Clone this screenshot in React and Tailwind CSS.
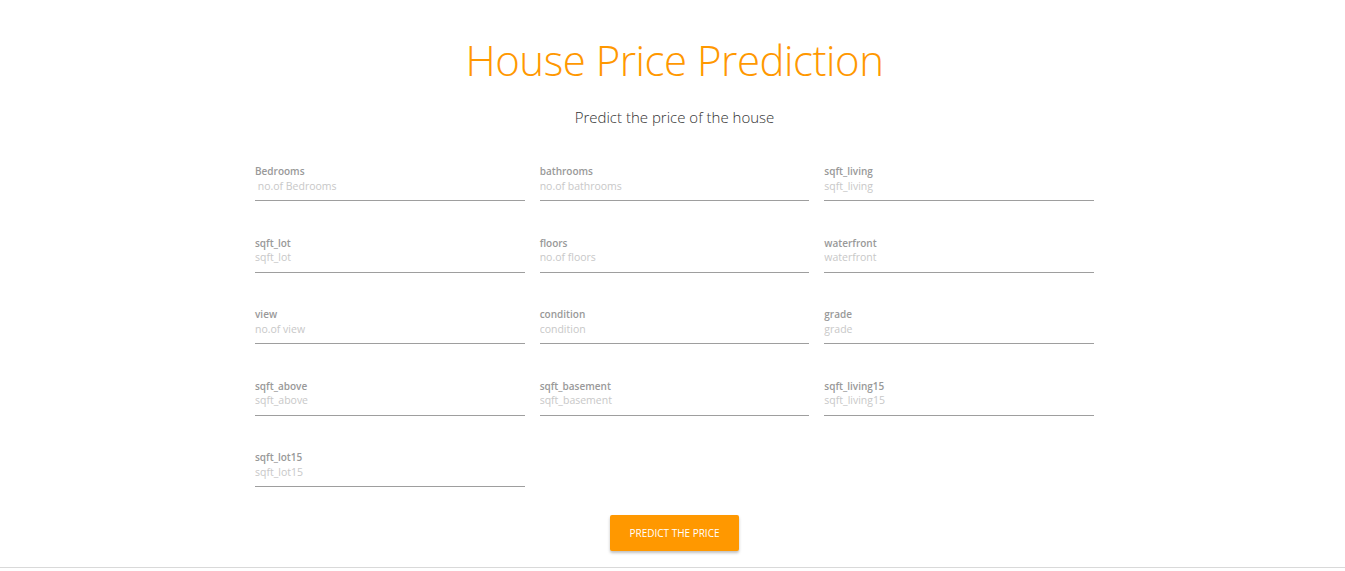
const fields = [
  ['Bedrooms', ' no.of Bedrooms'],
  ['bathrooms', 'no.of bathrooms'],
  ['sqft_living', 'sqft_living'],
  ['sqft_lot', 'sqft_lot'],
  ['floors', 'no.of floors'],
  ['waterfront', 'waterfront'],
  ['view', 'no.of view'],
  ['condition', 'condition'],
  ['grade', 'grade'],
  ['sqft_above', 'sqft_above'],
  ['sqft_basement', 'sqft_basement'],
  ['sqft_living15', 'sqft_living15'],
  ['sqft_lot15', 'sqft_lot15'],
];

export default function App() {
  return (
    <div className="min-h-[571px] bg-white font-['Open_Sans',sans-serif] flex flex-col">
      <div className="flex-1 flex flex-col items-center pl-[4px]">
        <h1 className="mt-[34px] text-[42px] leading-[52px] font-light text-[#ff9800] tracking-[-0.5px]">
          House Price Prediction
        </h1>
        <p className="mt-[21px] text-[15px] leading-[20px] font-light text-[#333]">
          Predict the price of the house
        </p>

        <form className="mt-[38px] w-[839px] grid grid-cols-3 gap-x-[15px] gap-y-[35.5px]">
          {fields.map(([label, ph]) => (
            <div key={label} className="flex flex-col">
              <label className="text-[10px] leading-[12px] font-semibold text-[#999]">{label}</label>
              <input
                placeholder={ph}
                className="h-[24px] pt-[1px] pb-[7px] border-b border-[#9e9e9e] text-[10.5px] outline-none placeholder:text-[#c8c8c8] bg-transparent"
              />
            </div>
          ))}
        </form>

        <button className="mt-[28px] w-[129px] h-[36px] bg-[#ff9800] text-white text-[10px] font-medium uppercase rounded-[2px] shadow-[0_2px_3px_rgba(0,0,0,0.25)]">
          Predict the price
        </button>
      </div>
      <div className="h-[4px] border-t border-[#d9d9d9]" />
    </div>
  );
}
